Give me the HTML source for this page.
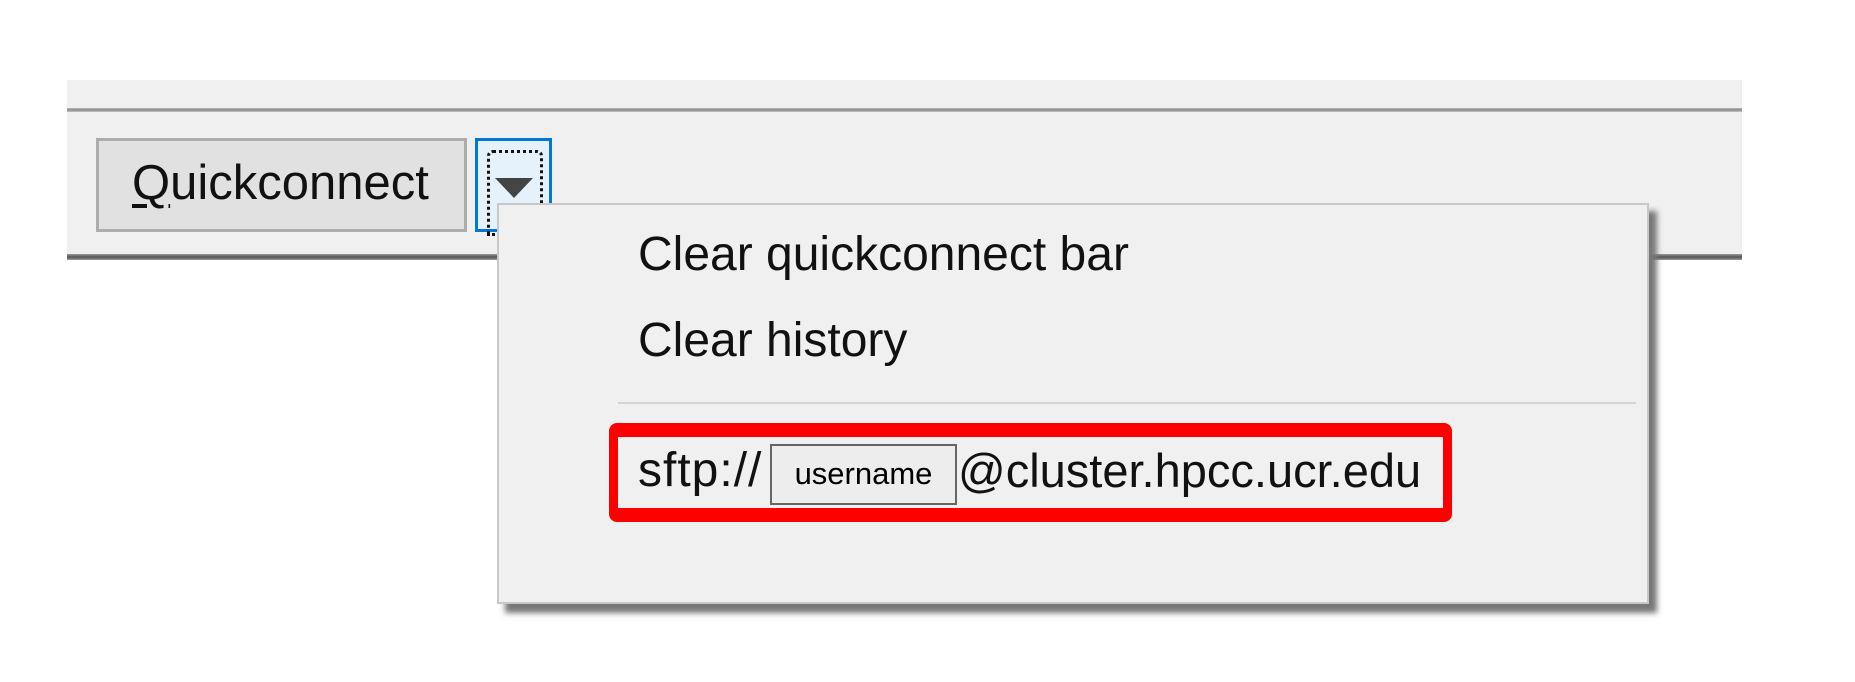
<!DOCTYPE html>
<html><head><meta charset="utf-8"><style>
html,body{margin:0;padding:0;background:#fff;width:1855px;height:682px;overflow:hidden;position:relative;font-family:"Liberation Sans",sans-serif;}
.a{position:absolute;}
.bar{left:67px;top:80px;width:1675px;height:178px;background:#f0f0f0;}
.t{white-space:nowrap;color:#111;}
</style></head><body>
<div class="a bar"></div>
<div class="a" style="left:67px;top:108px;width:1675px;height:4px;background:linear-gradient(#b8b8b8,#8a8a8a,#c8c8c8)"></div>
<div class="a" style="left:67px;top:254px;width:1675px;height:6px;background:linear-gradient(#9a9a9a,#555,#999)"></div>
<div class="a" style="left:96px;top:138px;width:365px;height:88px;background:#e1e1e1;border:3px solid #adadad;"></div>
<div class="a t" style="left:132px;top:156px;font-size:49px;line-height:54px;"><span style="text-decoration:underline;text-underline-offset:5px;">Q</span>uickconnect</div>
<div class="a" style="left:475px;top:138px;width:71px;height:88px;background:#e5f1fb;border:3px solid #0078d7;"></div>
<div class="a" style="left:487px;top:150px;width:50px;height:80px;border:3px dotted #111;border-radius:6px 6px 0 0;"></div>
<svg class="a" style="left:495px;top:178px" width="38" height="20"><polygon points="0,0 38,0 19,20" fill="#444"/></svg>
<div class="a" style="left:505px;top:211px;width:1152px;height:402px;background:#777;filter:blur(3px);"></div>
<div class="a" style="left:497px;top:203px;width:1148px;height:397px;background:#f0f0f0;border:2px solid #c8c8c8;"></div>
<div class="a" style="left:618px;top:402px;width:1018px;height:2px;background:#d4d4d4"></div>
<div class="a t" style="left:638px;top:228px;font-size:48px;line-height:54px;">Clear quickconnect bar</div>
<div class="a t" style="left:638px;top:314px;font-size:48px;line-height:54px;">Clear history</div>
<div class="a" style="left:609px;top:423px;width:825px;height:71px;border:solid #ff0000;border-width:14px 9px 14px 9px;border-radius:8px;background:#f0f0f0;"></div>
<div class="a t" style="left:638px;top:444px;font-size:48px;line-height:54px;letter-spacing:1px;">sftp://</div>
<div class="a" style="left:770px;top:444px;width:183px;height:57px;border:2px solid #666;background:#ededed;"></div>
<div class="a t" style="left:770px;top:457px;width:187px;text-align:center;font-size:31px;line-height:34px;color:#000;">username</div>
<div class="a t" style="left:958px;top:444px;font-size:47px;line-height:54px;">@cluster.hpcc.ucr.edu</div>
</body></html>
